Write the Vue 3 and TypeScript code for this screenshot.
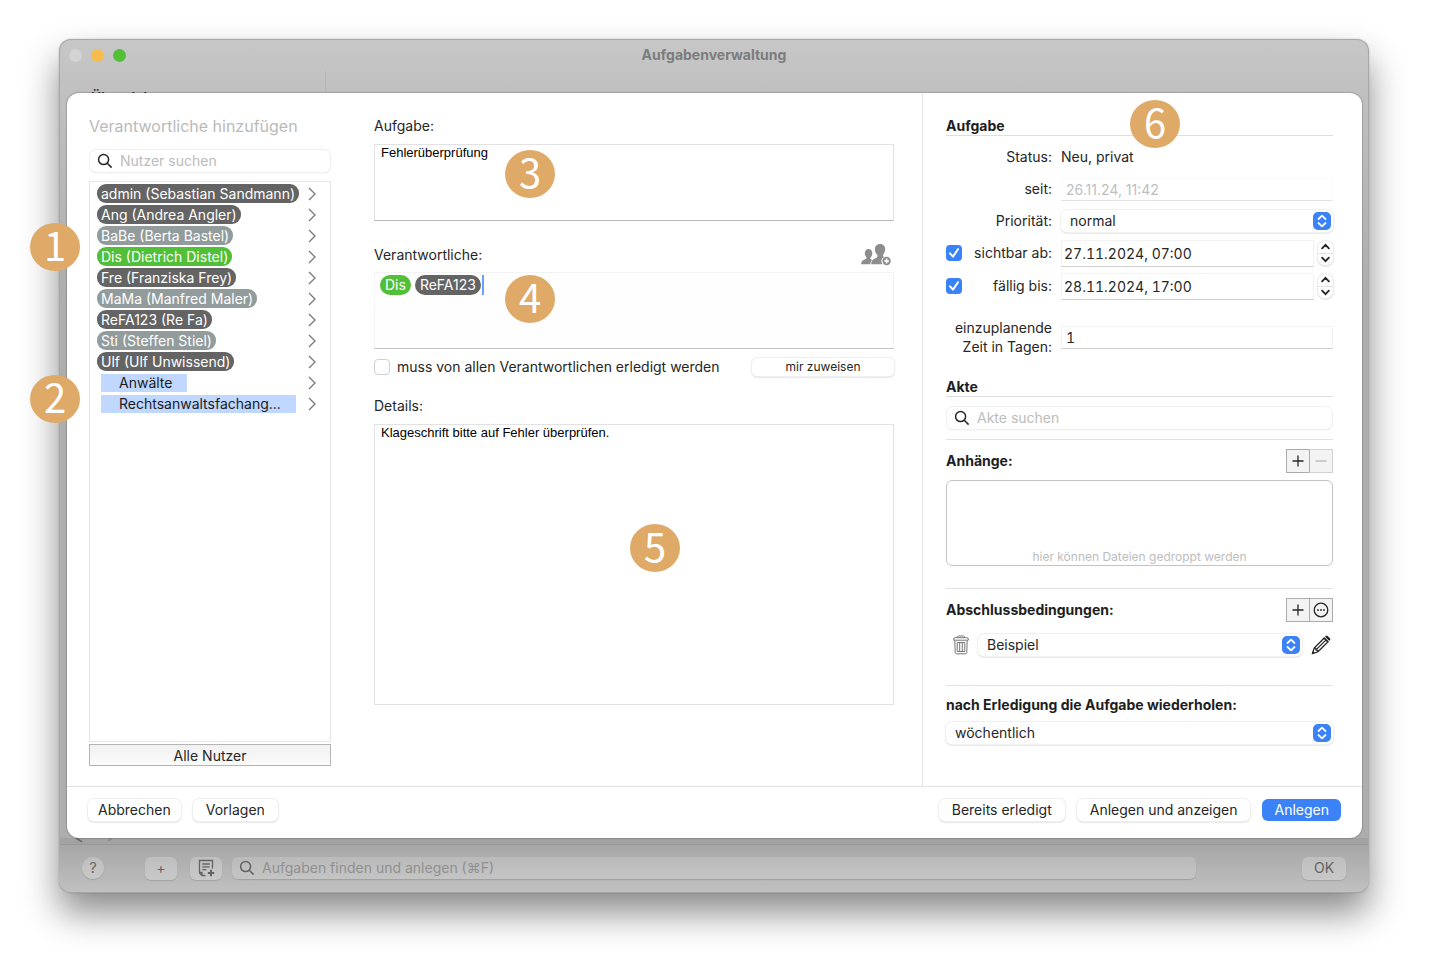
<script setup lang="ts">
import { ref } from 'vue'

type Tone = 'dark' | 'muted' | 'green'
interface User { name: string; tone: Tone }

const users: User[] = [
  { name: 'admin (Sebastian Sandmann)', tone: 'dark' },
  { name: 'Ang (Andrea Angler)', tone: 'dark' },
  { name: 'BaBe (Berta Bastel)', tone: 'muted' },
  { name: 'Dis (Dietrich Distel)', tone: 'green' },
  { name: 'Fre (Franziska Frey)', tone: 'dark' },
  { name: 'MaMa (Manfred Maler)', tone: 'muted' },
  { name: 'ReFA123 (Re Fa)', tone: 'dark' },
  { name: 'Sti (Steffen Stiel)', tone: 'muted' },
  { name: 'Ulf (Ulf Unwissend)', tone: 'dark' },
]
const groups: string[] = ['Anwälte', 'Rechtsanwaltsfachang...']

const task = ref('Fehlerüberprüfung')
const details = ref('Klageschrift bitte auf Fehler überprüfen.')
const everyone = ref(false)
const dates = ref([
  { id: 'visible', label: 'sichtbar ab:', value: '27.11.2024, 07:00', on: true },
  { id: 'due', label: 'fällig bis:', value: '28.11.2024, 17:00', on: true },
])
const days = ref('1')
</script>

<template>
  <div class="desktop">
    <div class="window">
      <header class="titlebar">
        <div class="lights"><i class="off"></i><i class="yellow"></i><i class="green"></i></div>
        <h1>Aufgabenverwaltung</h1>
      </header>
      <div class="behind-top"><span>Übersicht</span></div>

      <form class="sheet" @submit.prevent>
        <div class="columns">
          <section class="people">
            <h2>Verantwortliche hinzufügen</h2>
            <label class="search">
              <svg viewBox="0 0 16 16"><circle cx="6.6" cy="6.6" r="5" /><path d="M10.3 10.3 14.6 14.6" /></svg>
              <input type="text" placeholder="Nutzer suchen" aria-label="Nutzer suchen" />
            </label>
            <ul class="list">
              <li v-for="u in users" :key="u.name">
                <span class="pill" :class="u.tone">{{ u.name }}</span>
                <button type="button" class="chev" :aria-label="u.name"><svg viewBox="0 0 8 14"><path d="M1 1 7 7 1 13" /></svg></button>
              </li>
              <li v-for="g in groups" :key="g">
                <span class="group">{{ g }}</span>
                <button type="button" class="chev" :aria-label="g"><svg viewBox="0 0 8 14"><path d="M1 1 7 7 1 13" /></svg></button>
              </li>
            </ul>
            <button type="button" class="all">Alle Nutzer</button>
            <b class="badge b1">1</b>
            <b class="badge b2">2</b>
          </section>

          <section class="main">
            <label class="caption" for="task">Aufgabe:</label>
            <div class="holder">
              <textarea id="task" v-model="task" class="box"></textarea>
              <b class="badge b3">3</b>
            </div>
            <div class="resp">
              <label for="resp">Verantwortliche:</label>
              <svg class="persons" viewBox="0 0 30 22">
                <path d="M7.5 5c2.300 0 3.800 1.700 3.800 4.200 0 2-.8 3.400-1.700 4.300-.3 1.500.2 2 1.700 2.600-1.300 1-1.800 2.400-1.900 4.100H.2c0-2.500.6-3.600 3-4.500 2-.8 2.600-1.200 2.100-2.500-.9-.9-1.500-2.200-1.500-4C3.800 6.700 5.200 5 7.500 5z" />
                <path d="M19 0c3.200 0 5.200 2.200 5.200 5.200 0 2.300-.8 4-2 5.200-.3 1.500 0 2.300.8 2.800-2 1-2.700 2.600-2.600 4.300.1 1.100.5 2 1.200 2.700H10.300c.1-3.200.8-4.500 3.600-5.600 2.300-.9 3-1.700 2.300-4-1.400-1.200-2.300-3-2.300-5.400C13.900 2.200 16 0 19 0z" />
                <path fill-rule="evenodd" d="M25.600 12.800a4.200 4.200 0 1 0 0 8.400 4.200 4.200 0 0 0 0-8.400zm-.8 1.800h1.600v1.600H28v1.600h-1.600v1.600h-1.600v-1.600h-1.600v-1.600h1.600z" />
              </svg>
            </div>
            <div class="tokens">
              <span class="pill green">Dis</span>
              <span class="pill dark">ReFA123</span>
              <i class="caret"></i>
              <input id="resp" type="text" />
              <b class="badge b4">4</b>
            </div>
            <div class="assign">
              <label><input v-model="everyone" type="checkbox" class="check" />muss von allen Verantwortlichen erledigt werden</label>
              <button type="button" class="btn small">mir zuweisen</button>
            </div>
            <label class="caption" for="details">Details:</label>
            <div class="holder grow">
              <textarea id="details" v-model="details" class="box plain"></textarea>
              <b class="badge b5">5</b>
            </div>
          </section>

          <aside class="side">
            <h3>Aufgabe</h3>
            <b class="badge b6">6</b>
            <div class="rows">
              <div class="row"><span class="lab">Status:</span><span class="val">Neu, privat</span></div>
              <div class="row"><label class="lab" for="since">seit:</label><input id="since" class="field faint" type="text" value="26.11.24, 11:42" disabled /></div>
              <div class="row">
                <label class="lab" for="prio">Priorität:</label>
                <div class="select">
                  <select id="prio"><option>normal</option></select>
                  <span class="updown"><svg viewBox="0 0 18 18"><path d="M5.500 7 9 3.700 12.500 7M5.500 11 9 14.300 12.500 11" /></svg></span>
                </div>
              </div>
              <div v-for="d in dates" :key="d.id" class="row dated">
                <div class="lab tick">
                  <input v-model="d.on" type="checkbox" class="check" :aria-label="d.label" />
                  <label :for="d.id">{{ d.label }}</label>
                </div>
                <input :id="d.id" v-model="d.value" class="field date" type="text" />
                <div class="stepper">
                  <button type="button" aria-label="mehr"><svg viewBox="0 0 8 6"><path d="M1 4.700 4 1.500 7 4.700" /></svg></button>
                  <button type="button" aria-label="weniger"><svg viewBox="0 0 8 6"><path d="M1 1.300 4 4.500 7 1.300" /></svg></button>
                </div>
              </div>
              <div class="row days">
                <label class="lab" for="days">einzuplanende Zeit in Tagen:</label>
                <input id="days" v-model="days" class="field" type="text" />
              </div>
            </div>

            <h3>Akte</h3>
            <label class="search file">
              <svg viewBox="0 0 16 16"><circle cx="6.6" cy="6.6" r="5" /><path d="M10.3 10.3 14.6 14.6" /></svg>
              <input type="text" placeholder="Akte suchen" aria-label="Akte suchen" />
            </label>

            <div class="section">
              <h4>Anhänge:</h4>
              <div class="pair">
                <button type="button" aria-label="Anhang hinzufügen"><svg viewBox="0 0 16 16"><path d="M8 2.500v11M2.500 8h11" /></svg></button>
                <button type="button" disabled aria-label="Anhang entfernen"><svg viewBox="0 0 16 16"><path d="M2.500 8h11" /></svg></button>
              </div>
            </div>
            <div class="drop">hier können Dateien gedroppt werden</div>

            <div class="section">
              <h4>Abschlussbedingungen:</h4>
              <div class="pair">
                <button type="button" aria-label="Bedingung hinzufügen"><svg viewBox="0 0 16 16"><path d="M8 2.500v11M2.500 8h11" /></svg></button>
                <button type="button" aria-label="Weitere Optionen"><svg viewBox="0 0 16 16"><circle cx="8" cy="8" r="6.800" /><path class="dots" d="M5 8h.01M8 8h.01M11 8h.01" /></svg></button>
              </div>
            </div>
            <div class="condition">
              <button type="button" class="icon" aria-label="Löschen">
                <svg class="trash" viewBox="0 0 16 20"><path d="M4.500 2.700V2Q4.500 1 5.500 1h5q1 0 1 1v.7M.7 5.200V4q0-1.300 1.400-1.300h11.800q1.400 0 1.400 1.300v1.200zM1.800 5.400l.4 12q.1 1.400 1.500 1.400h8.600q1.400 0 1.500-1.400l.4-12M4.200 7.500h7.600v9H4.200zM6.700 7.500v9M9.300 7.500v9" /></svg>
              </button>
              <div class="select">
                <select aria-label="Abschlussbedingung"><option>Beispiel</option></select>
                <span class="updown"><svg viewBox="0 0 18 18"><path d="M5.500 7 9 3.700 12.500 7M5.500 11 9 14.300 12.500 11" /></svg></span>
              </div>
              <button type="button" class="icon" aria-label="Bearbeiten">
                <svg class="pencil" viewBox="0 0 20 20"><path d="M1.500 18.500 3.200 13 13 3.200 16.800 7 7 16.800zM5 14.900 14.800 5.100M3.200 13l1.400.4.500 1.500 1.500.5.400 1.400" /><path class="solid" d="M12.600 3.100 14.800 1q.9-.8 1.800 0L19 3.300q.8.900 0 1.800L16.900 7.300zM1 19l.8-3 2.200 2.200z" /><path class="cut" d="M13.700 1.900 18.100 6.300" /></svg>
              </button>
            </div>

            <div class="section repeat"><h4>nach Erledigung die Aufgabe wiederholen:</h4></div>
            <div class="select">
              <select aria-label="Wiederholung"><option>wöchentlich</option></select>
              <span class="updown"><svg viewBox="0 0 18 18"><path d="M5.500 7 9 3.700 12.500 7M5.500 11 9 14.300 12.500 11" /></svg></span>
            </div>
          </aside>
        </div>

        <footer class="actions">
          <button type="button" class="btn left">Abbrechen</button>
          <button type="button" class="btn">Vorlagen</button>
          <span class="spacer"></span>
          <button type="button" class="btn">Bereits erledigt</button>
          <button type="button" class="btn">Anlegen und anzeigen</button>
          <button type="submit" class="btn primary">Anlegen</button>
        </footer>
      </form>

      <div class="behind-bottom">
        <svg viewBox="0 0 60 6"><path d="M16 0 22 4" /><path class="weak" d="M52 0 48 3" /></svg>
      </div>
      <footer class="toolbar">
        <button type="button" class="tool round">?</button>
        <button type="button" class="tool">+</button>
        <button type="button" class="tool note" aria-label="Notiz anlegen">
          <svg viewBox="0 0 18 18"><path d="M15.500 9.500V1.500H2.500V14l2.500 2.500h3.500M2.500 13.500H5v3M5.300 5h7.400M5.300 7.800h7.400M5.300 10.600h4" /><path class="plus" d="M14 10.800v6.400M10.800 14h6.400" /></svg>
        </button>
        <label class="search find">
          <svg viewBox="0 0 16 16"><circle cx="6.6" cy="6.6" r="5" /><path d="M10.3 10.3 14.6 14.6" /></svg>
          <input type="text" placeholder="Aufgaben finden und anlegen (⌘F)" aria-label="Aufgaben finden und anlegen" />
        </label>
        <button type="button" class="tool ok">OK</button>
      </footer>
    </div>
  </div>
</template>

<style>
body { margin: 0; background: #fff; }
</style>

<style scoped>
* { box-sizing: border-box; }
.desktop {
  min-height: 100vh;
  padding: 39px 61px 79px 59px;
  display: flex;
  overflow: hidden;
  font: 14px/20px Inter, "Liberation Sans", sans-serif;
  color: #262626;
}
button, input, select, textarea { font: inherit; color: inherit; margin: 0; }
h1, h2, h3, h4, ul { margin: 0; padding: 0; }
svg { display: block; fill: none; stroke: currentColor; }
.window {
  flex: 1;
  display: flex;
  flex-direction: column;
  border-radius: 12px;
  background: linear-gradient(#c7c7c7, #c0c0c0 54px, #adadad 260px);
  box-shadow: inset 0 0 0 1px #a8a8a8, 0 0 2px rgba(0, 0, 0, .2), 0 20px 36px rgba(0, 0, 0, .46);
  position: relative;
}
.titlebar { display: grid; grid-template-columns: 1fr auto 1fr; align-items: center; height: 32px; padding: 0 10px; }
.titlebar h1 { font-size: 14px; font-weight: 700; line-height: 20px; color: #7c7c7c; }
.lights { display: flex; gap: 9px; }
.lights i { width: 13px; height: 13px; border-radius: 50%; }
.lights .off { background: #d3d3d3; }
.lights .yellow { background: #f4bd4f; }
.lights .green { background: #51c038; }
.behind-top { height: 22px; width: 267px; padding: 19px 0 0 32px; line-height: 16px; font-weight: 600; color: #333; border-right: 1px solid #b5b5b5; overflow: hidden; }
.sheet {
  flex: 1;
  display: flex;
  flex-direction: column;
  margin: 0 7px 0 8px;
  background: #fff;
  border-radius: 12px;
  position: relative;
  box-shadow: 0 0 1px 1px rgba(0, 0, 0, .16);
}
.columns { flex: 1; display: grid; grid-template-columns: 264px minmax(0, 1fr) 440px; }

.people { position: relative; padding: 21px 0 20px 22px; display: flex; flex-direction: column; }
.people h2 { font-size: 16px; font-weight: 400; line-height: 24px; color: #bababa; white-space: nowrap; margin-bottom: 12px; }
.search {
  display: flex; align-items: center; gap: 7px; height: 22px; padding: 0 7px; margin: 0 1px;
  border-radius: 6px; background: #fff;
  box-shadow: 0 0 0 1px #f0f0f0, 0 1px 1px rgba(0, 0, 0, .24);
}
.search svg { width: 16px; height: 16px; flex: none; stroke-width: 1.5; }
.search input { flex: 1; min-width: 0; border: 0; padding: 0; outline: 0; background: none; }
.search input::placeholder { color: #bcbcbc; opacity: 1; }
.list { flex: 1; list-style: none; margin-top: 9px; border: 1px solid #e6e6e6; padding: 1px 14px 1px 7px; }
.list li { display: flex; align-items: center; justify-content: space-between; height: 21px; }
.pill { height: 19px; line-height: 19px; padding: 0 4px; border-radius: 9px; color: #fff; white-space: nowrap; }
.pill.dark { background: #646464; }
.pill.muted { background: #939c9d; }
.pill.green { background: #51bf37; }
.group { height: 18px; line-height: 18px; margin-left: 4px; padding: 0 15px 0 18px; background: #c0d7ff; color: #1c1c1c; white-space: nowrap; }
.chev { border: 0; padding: 0; background: none; color: #777; }
.chev svg { width: 8px; height: 14px; stroke-width: 1.3; }
.all { height: 22px; margin-top: 2px; padding: 1px 0 0; line-height: 18px; border: 1px solid #b4b4b4; background: linear-gradient(#f1f1f1, #fbfbfb); }

.main { padding: 23px 28px 81px 43px; display: flex; flex-direction: column; }
.caption { margin-bottom: 8px; }
.holder { position: relative; display: flex; height: 77px; }
.holder.grow { flex: 1; height: auto; }
.box {
  flex: 1; resize: none; outline: 0; padding: 0 6px; border: 1px solid #e2e2e2; border-bottom-color: #b8b8b8;
  font: 13px/15px "Liberation Sans", Arial, sans-serif; color: #000;
}
.box.plain { border-bottom-color: #e2e2e2; }
.resp { display: flex; justify-content: space-between; align-items: center; height: 24px; margin: 22px 0 5px; }
.persons { width: 30px; height: 22px; margin-right: 3px; fill: #8d8d8d; stroke: none; }
.tokens { position: relative; display: flex; height: 77px; padding: 2px 5px; border: 1px solid #f3f3f3; border-bottom-color: #c0c0c0; background: #fefefe; }
.tokens .pill { height: 20px; line-height: 20px; padding: 0 5px; margin-right: 4px; border-radius: 10px; }
.tokens .pill.dark { margin-right: 1px; }
.caret { width: 2px; height: 20px; background: #6c9ff7; }
.tokens input { flex: 1; height: 20px; border: 0; padding: 0; outline: 0; background: none; }
.assign { display: flex; align-items: center; justify-content: space-between; height: 20px; margin: 8px 0 19px; }
.assign label { display: flex; align-items: center; gap: 7px; white-space: nowrap; }
.check { appearance: none; width: 16px; height: 16px; flex: none; border-radius: 4px; background: #fff; border: 1px solid #cfcfcf; }
.check:checked { border: 0; background: #3a82f7 url("data:image/svg+xml,%3Csvg xmlns='http://www.w3.org/2000/svg' viewBox='0 0 16 16'%3E%3Cpath d='M4 8.300 7 11.600 12 4.200' fill='none' stroke='white' stroke-width='2' stroke-linecap='round' stroke-linejoin='round'/%3E%3C/svg%3E"); }
.btn {
  height: 22px; padding: 0 13px; border: 0; border-radius: 6px; background: #fff; white-space: nowrap; line-height: 20px;
  box-shadow: 0 0 0 1px #efefef, 0 1px 2px rgba(0, 0, 0, .3);
}
.btn.left { padding: 0 10px; }
.btn.small { width: 142px; height: 18px; font-size: 12px; line-height: 18px; border-radius: 5px; }
.btn.primary { padding: 0 12px; background: #3b82f7; color: #fff; box-shadow: none; }

.side { position: relative; padding: 24px 29px 41px 23px; border-left: 1px solid #e6e6e6; }
.side h3, .side h4 { font-size: 14px; font-weight: 700; line-height: 20px; color: #1e1e1e; white-space: nowrap; }
.side h3 { line-height: 18px; border-bottom: 1px solid #dedede; }
.rows { padding: 5px 0 22px; }
.row { display: flex; align-items: center; height: 32px; }
.row.dated + .row.dated { margin-top: 1px; }
.lab { width: 106px; flex: none; text-align: right; margin-right: 9px; }
.tick { display: flex; align-items: center; justify-content: space-between; }
.field { flex: 1; min-width: 0; height: 23px; padding: 0 4px; outline: 0; background: #fff; border: 1px solid #f2f2f2; border-bottom-color: #cfcfcf; font-variant-numeric: tabular-nums; }
.field.date { height: 27px; padding: 0 2px; }
.faint { color: #c0c0c0; border-color: #fafafa; border-bottom-color: #e2e2e2; font-variant-numeric: normal; }
.row.days { height: 38px; margin-top: 16px; line-height: 19px; }
.stepper { width: 15px; height: 24px; margin-left: 4px; display: flex; flex-direction: column; border-radius: 7px; background: #fff; box-shadow: 0 0 0 1px #ececec, 0 1px 2px rgba(0, 0, 0, .3); }
.stepper button { flex: 1; display: grid; place-items: center; padding: 0; border: 0; background: none; }
.stepper button + button { border-top: 1px solid #e3e3e3; }
.stepper svg { width: 9px; height: 7px; stroke-width: 1.6; stroke-linecap: round; }
.select { flex: 1; min-width: 0; position: relative; display: flex; }
.select select {
  flex: 1; min-width: 0; appearance: none; height: 22px; padding: 0 30px 0 9px; border: 0; border-radius: 6px; background: #fff; outline: 0;
  box-shadow: 0 0 0 1px #f0f0f0, 0 1px 2px rgba(0, 0, 0, .28);
}
.updown { position: absolute; right: 2px; top: 2px; width: 18px; height: 18px; border-radius: 5px; background: #3b82f7; color: #fff; pointer-events: none; }
.updown svg { stroke-width: 1.8; stroke-linecap: round; stroke-linejoin: round; }
.file { margin: 10px 1px 10px; }
.section { display: flex; align-items: center; justify-content: space-between; padding-top: 8px; height: 41px; border-top: 1px solid #e2e2e2; padding-bottom: 7px; }
.pair { display: flex; }
.pair button { width: 24px; height: 24px; padding: 0; display: grid; place-items: center; border: 1px solid #ababab; background: #f3f3f3; }
.pair button + button { margin-left: -1px; }
.pair button:disabled { color: #b5b5b5; border-color: #d2d2d2; border-left-color: #ababab; }
.pair svg { width: 16px; height: 16px; stroke-width: 1.3; }
.pair .dots { stroke-width: 1.8; stroke-linecap: round; }
.drop { height: 86px; margin-bottom: 22px; display: flex; align-items: flex-end; justify-content: center; border: 1px solid #c4c4c4; border-radius: 6px; font-size: 12px; line-height: 16px; color: #bdbdbd; }
.condition { display: flex; align-items: center; height: 32px; margin-bottom: 24px; gap: 9px; }
.condition .icon { border: 0; padding: 0; background: none; }
.condition .icon:first-child { padding-left: 7px; }
.trash { width: 16px; height: 20px; color: #777; stroke-width: 1; }
.pencil { width: 20px; height: 20px; stroke-width: 1.3; margin-right: 2px; }
.pencil .solid { fill: currentColor; stroke: none; }
.pencil .cut { stroke: #fff; stroke-width: 1; }
.section.repeat { height: 37px; padding: 1px 0 0; }

.actions { height: 52px; display: flex; align-items: center; gap: 12px; padding: 0 21px 6px; border-top: 1px solid #e2e2e2; }
.spacer { flex: 1; }
.behind-bottom { height: 7px; background: #a2a2a2; border-bottom: 1px solid #999; margin: 0 1px; }
.behind-bottom svg { width: 60px; height: 6px; stroke: #6d6d6d; stroke-width: 2; }
.behind-bottom .weak { stroke: #8d8d8d; }
.toolbar { height: 48px; display: flex; align-items: center; padding: 0 23px 2px; color: #636363; border-radius: 0 0 12px 12px; background: linear-gradient(#a6a6a6, #c1c1c1); box-shadow: inset 0 -1px 0 #a4a4a4; }
.tool { width: 32px; height: 23px; padding: 0; border: 0; border-radius: 6px; background: rgba(255, 255, 255, .22); box-shadow: 0 1px 1px rgba(0, 0, 0, .12); display: grid; place-items: center; margin-right: 13px; }
.tool.round { width: 22px; height: 22px; border-radius: 50%; margin-right: 41px; }
.tool.note svg { width: 18px; height: 18px; stroke-width: 1.3; }
.tool.note .plus { stroke-width: 2; }
.toolbar .find { flex: 1; margin: 0 106px 0 -3px; background: rgba(255, 255, 255, .16); box-shadow: 0 1px 1px rgba(0, 0, 0, .14); }
.toolbar .find input::placeholder { color: #909090; }
.tool.ok { width: 44px; margin-right: 0; }

.badge {
  position: absolute; width: 50px; height: 48px; border-radius: 50%; background: #dfa968; color: #fff;
  font: 400 40px/42px "Noto Sans CJK JP", sans-serif; text-align: center; pointer-events: none; z-index: 2;
}
.b1 { left: -37px; top: 130px; }
.b2 { left: -37px; top: 282px; }
.b3 { left: 131px; top: 6px; }
.b4 { left: 130px; top: 2px; }
.b5 { left: 50%; top: 50%; margin: -41px 0 0 -4px; }
.b6 { left: 207px; top: 7px; }
</style>
